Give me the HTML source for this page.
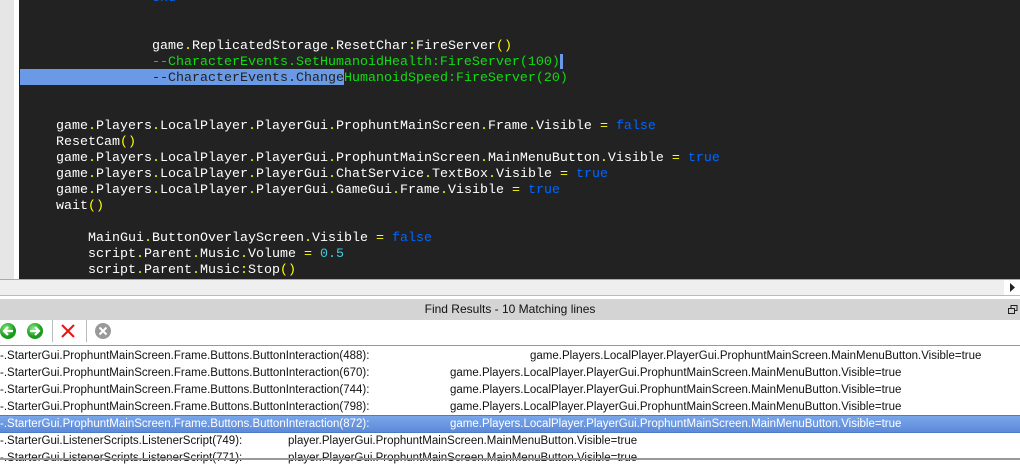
<!DOCTYPE html>
<html><head><style>
*{margin:0;padding:0;box-sizing:border-box}
body{width:1020px;height:460px;overflow:hidden;background:#fff;position:relative;font-family:"Liberation Sans",sans-serif}
#gut{position:absolute;left:0;top:0;width:14px;height:280px;background:#e6e6e6}
#gut2{position:absolute;left:14px;top:0;width:5px;height:280px;background:#fff}
#ed{position:absolute;left:19px;top:0;width:1001px;height:279px;background:#222}
.l{position:absolute;font:13.33px/16px "Liberation Mono",monospace;color:#fff;white-space:pre;margin-top:2px}
.y{color:#ff0}.g{color:#1d1}.b{color:#06f}.c{color:#4cd}
#sel{position:absolute;left:20px;top:69px;width:324px;height:16px;background:#6a9ae6}
#cur{position:absolute;left:560px;top:54px;width:3px;height:15px;background:#6a9ae6}
#hs{position:absolute;left:0;top:279px;width:1020px;height:17px;background:#efefef;border-top:1px solid #aaa;border-bottom:1px solid #bbb}
#hs .a{position:absolute;right:0;top:0;width:16px;height:15px;background:#fff}
#title{position:absolute;left:0;top:299px;width:1020px;height:21px;background:#d4d4d4;font-size:12px;line-height:21px;text-align:center;color:#111}
#tb{position:absolute;left:0;top:320px;width:1020px;height:26px;background:#fff;border-bottom:1px solid #999}
.r{position:absolute;left:0;width:1020px;height:17px;font-size:11.5px;line-height:17px;color:#111;white-space:pre;padding-top:1px}
.r span{position:absolute;top:1px}
.s{background:linear-gradient(#7aa6ea,#5b8ad8);color:#fff;border-top:1px solid #4d7bc9;border-bottom:1px solid #4d7bc9}
</style></head><body>
<div id="gut"></div><div id="gut2"></div>
<div id="ed"></div>
<div id="sel"></div><div id="cur"></div>
<div class="l b" style="left:152px;top:-11px">end</div>
<div class="l" style="left:152px;top:37px">game<span class="y">.</span>ReplicatedStorage<span class="y">.</span>ResetChar<span class="y">:</span>FireServer<span class="y">()</span></div>
<div class="l g" style="left:152px;top:53px">--CharacterEvents.SetHumanoidHealth:FireServer(100)</div>
<div class="l" style="left:152px;top:69px"><span style="color:#222">--CharacterEvents.Change</span><span class="g">HumanoidSpeed:FireServer(20)</span></div>
<div class="l" style="left:56px;top:117px">game<span class="y">.</span>Players<span class="y">.</span>LocalPlayer<span class="y">.</span>PlayerGui<span class="y">.</span>ProphuntMainScreen<span class="y">.</span>Frame<span class="y">.</span>Visible <span class="y">=</span> <span class="b">false</span></div>
<div class="l" style="left:56px;top:133px">ResetCam<span class="y">()</span></div>
<div class="l" style="left:56px;top:149px">game<span class="y">.</span>Players<span class="y">.</span>LocalPlayer<span class="y">.</span>PlayerGui<span class="y">.</span>ProphuntMainScreen<span class="y">.</span>MainMenuButton<span class="y">.</span>Visible <span class="y">=</span> <span class="b">true</span></div>
<div class="l" style="left:56px;top:165px">game<span class="y">.</span>Players<span class="y">.</span>LocalPlayer<span class="y">.</span>PlayerGui<span class="y">.</span>ChatService<span class="y">.</span>TextBox<span class="y">.</span>Visible <span class="y">=</span> <span class="b">true</span></div>
<div class="l" style="left:56px;top:181px">game<span class="y">.</span>Players<span class="y">.</span>LocalPlayer<span class="y">.</span>PlayerGui<span class="y">.</span>GameGui<span class="y">.</span>Frame<span class="y">.</span>Visible <span class="y">=</span> <span class="b">true</span></div>
<div class="l" style="left:56px;top:197px">wait<span class="y">()</span></div>
<div class="l" style="left:88px;top:229px">MainGui<span class="y">.</span>ButtonOverlayScreen<span class="y">.</span>Visible <span class="y">=</span> <span class="b">false</span></div>
<div class="l" style="left:88px;top:245px">script<span class="y">.</span>Parent<span class="y">.</span>Music<span class="y">.</span>Volume <span class="y">=</span> <span class="c">0.5</span></div>
<div class="l" style="left:88px;top:261px">script<span class="y">.</span>Parent<span class="y">.</span>Music<span class="y">:</span>Stop<span class="y">()</span></div>
<div id="hs"><div class="a"><svg width="16" height="15"><path d="M6 3 L11 7.5 L6 12Z" fill="#222"/></svg></div></div>
<div id="title">Find Results - 10 Matching lines<svg style="position:absolute;right:2px;top:6px" width="10" height="9"><rect x="3" y="0.5" width="6" height="5" fill="none" stroke="#222"/><rect x="0.5" y="3.5" width="6" height="5" fill="#d4d4d4" stroke="#222"/></svg></div>
<div id="tb">
<svg width="130" height="26">
<defs><radialGradient id="gg" cx="40%" cy="35%"><stop offset="0" stop-color="#8e8"/><stop offset="1" stop-color="#1a9a1a"/></radialGradient></defs>
<circle cx="8" cy="11" r="8" fill="url(#gg)"/><path d="M13 11H4M8 7l-4 4 4 4" stroke="#fff" stroke-width="2.2" fill="none"/>
<circle cx="35" cy="11" r="8" fill="url(#gg)"/><path d="M30 11h9M35 7l4 4-4 4" stroke="#fff" stroke-width="2.2" fill="none"/>
<line x1="52.5" y1="0" x2="52.5" y2="22" stroke="#bbb"/>
<path d="M62 5l12 12M74 5L62 17" stroke="#e11" stroke-width="2"/>
<line x1="86.5" y1="0" x2="86.5" y2="22" stroke="#bbb"/>
<circle cx="103" cy="11" r="8" fill="#999"/><path d="M99.5 7.5l7 7M106.5 7.5l-7 7" stroke="#fff" stroke-width="2"/>
</svg></div>
<div class="r" style="top:347px"><span style="left:0">-.StarterGui.ProphuntMainScreen.Frame.Buttons.ButtonInteraction(488):</span><span style="left:530px">game.Players.LocalPlayer.PlayerGui.ProphuntMainScreen.MainMenuButton.Visible=true</span></div>
<div class="r" style="top:364px"><span style="left:0">-.StarterGui.ProphuntMainScreen.Frame.Buttons.ButtonInteraction(670):</span><span style="left:450px">game.Players.LocalPlayer.PlayerGui.ProphuntMainScreen.MainMenuButton.Visible=true</span></div>
<div class="r" style="top:381px"><span style="left:0">-.StarterGui.ProphuntMainScreen.Frame.Buttons.ButtonInteraction(744):</span><span style="left:450px">game.Players.LocalPlayer.PlayerGui.ProphuntMainScreen.MainMenuButton.Visible=true</span></div>
<div class="r" style="top:398px"><span style="left:0">-.StarterGui.ProphuntMainScreen.Frame.Buttons.ButtonInteraction(798):</span><span style="left:450px">game.Players.LocalPlayer.PlayerGui.ProphuntMainScreen.MainMenuButton.Visible=true</span></div>
<div class="r s" style="top:415px;height:18px"><span style="left:0;top:0">-.StarterGui.ProphuntMainScreen.Frame.Buttons.ButtonInteraction(872):</span><span style="left:450px;top:0">game.Players.LocalPlayer.PlayerGui.ProphuntMainScreen.MainMenuButton.Visible=true</span></div>
<div class="r" style="top:432px"><span style="left:0">-.StarterGui.ListenerScripts.ListenerScript(749):</span><span style="left:288px">player.PlayerGui.ProphuntMainScreen.MainMenuButton.Visible=true</span></div>
<div class="r" style="top:449px"><span style="left:0">-.StarterGui.ListenerScripts.ListenerScript(771):</span><span style="left:288px">player.PlayerGui.ProphuntMainScreen.MainMenuButton.Visible=true</span></div>
<div style="position:absolute;left:0;top:458px;width:1020px;height:2px;background:#999"></div>
</body></html>
